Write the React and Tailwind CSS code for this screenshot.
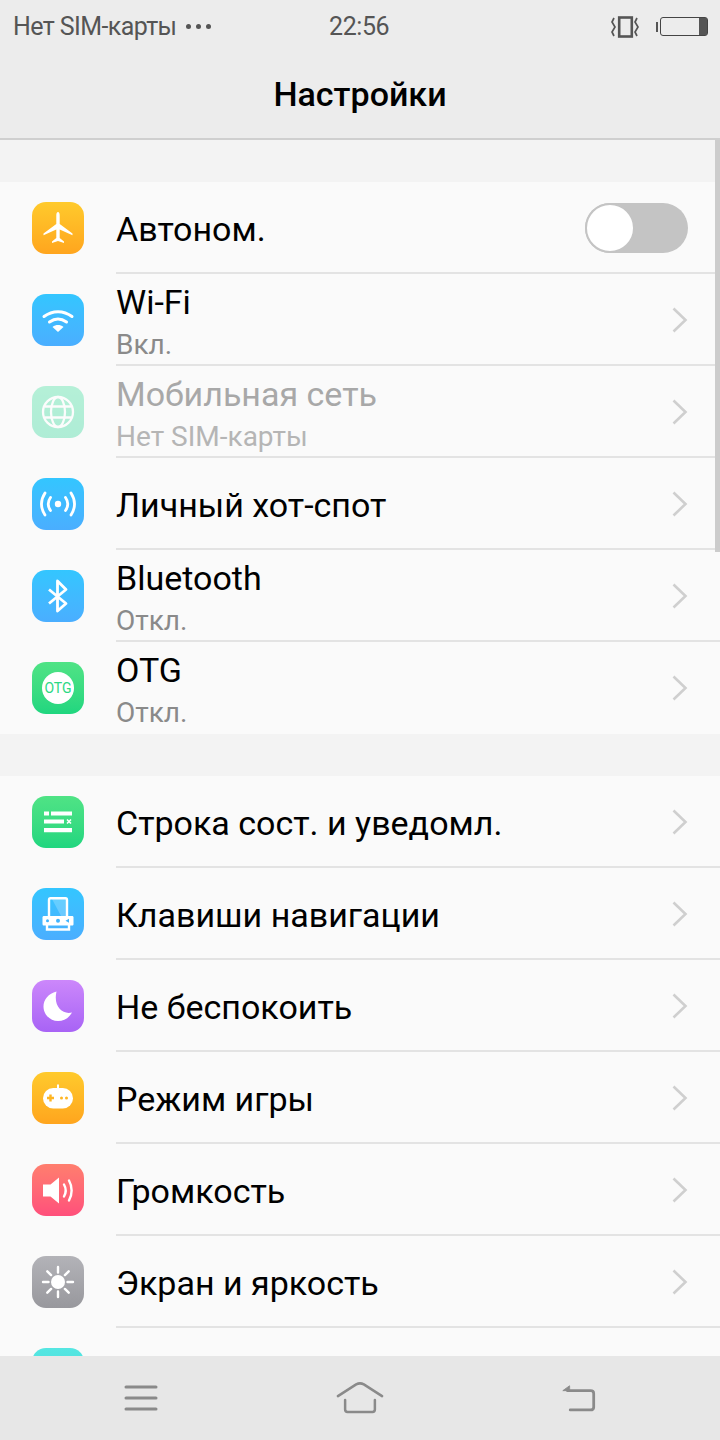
import React from 'react';

const Chevron = () => (
  <svg width="18" height="28" viewBox="0 0 18 28" fill="none" className="shrink-0 -mr-[1px]">
    <path d="M2.500 2.500 14.500 14 2.500 25.500" stroke="#cfcfcf" strokeWidth="2.600" />
  </svg>
);

const Icon = ({ gradient, dim, children }) => (
  <div className={`w-[52px] h-[52px] shrink-0 rounded-[14px] flex items-center justify-center bg-gradient-to-b ${gradient} ${dim ? 'opacity-40' : ''}`}>
    <svg width="52" height="52" viewBox="0 0 52 52" fill="none">{children}</svg>
  </div>
);

const blue = 'from-[#33c6ff] to-[#4aaeff]';
const green = 'from-[#4fe385] to-[#1fd67f]';
const orange = 'from-[#ffca2c] to-[#ffa51e]';

const PlaneIcon = () => (
  <Icon gradient={orange}>
    <path d="M26 10c1.100 0 1.700 1.500 1.700 3.500V22l12.800 9.400v1.800L27.700 27.500V36l4.300 3.500V41L26 39l-6 2v-1.500l4.300-3.500v-8.500L11.500 33.200v-1.800L24.300 22v-8.500c0-2 .6-3.500 1.700-3.500z" fill="#fff" />
  </Icon>
);
const WifiIcon = () => (
  <Icon gradient={blue}>
    <path d="M12 22.500c8.500-6.500 19.500-6.500 28 0" stroke="#fff" strokeWidth="3" strokeLinecap="round" />
    <path d="M17.500 28c5.500-4 11.500-4 17 0" stroke="#fff" strokeWidth="3" strokeLinecap="round" />
    <path d="M20.500 33c3.500-2.600 7.500-2.600 11 0L26 38z" fill="#fff" />
  </Icon>
);
const GlobeIcon = () => (
  <Icon gradient="from-[#4fe3a5] to-[#3fd9a0]" dim>
    <g stroke="#fff" strokeWidth="2.300">
      <circle cx="26" cy="26" r="15" />
      <ellipse cx="26" cy="26" rx="7" ry="15" />
      <path d="M13 20.500h26M13 31.500h26" />
    </g>
  </Icon>
);
const HotspotIcon = () => (
  <Icon gradient={blue}>
    <circle cx="26" cy="26" r="3.200" fill="#fff" />
    <g stroke="#fff" strokeWidth="2.800" strokeLinecap="round">
      <path d="M18.500 19.500c-2.800 4-2.800 9 0 13M33.500 19.500c2.800 4 2.800 9 0 13" />
      <path d="M13 15c-4.500 7-4.500 15 0 22M39 15c4.500 7 4.500 15 0 22" />
    </g>
  </Icon>
);
const BluetoothIcon = () => (
  <Icon gradient={blue}>
    <path d="M17 19.500 34 33.500 25.500 41V11L34 19.500 17 33.500" stroke="#fff" strokeWidth="2.800" strokeLinejoin="round" />
  </Icon>
);
const OtgIcon = () => (
  <Icon gradient={green}>
    <circle cx="26" cy="26" r="16" fill="#fff" />
    <text x="26" y="31" textAnchor="middle" fontSize="14" fill="#2cd884" fontFamily="Roboto, sans-serif">OTG</text>
  </Icon>
);
const StatusIcon = () => (
  <Icon gradient={green}>
    <path d="M12 15.500h5v4h-5zM19 15.500h21v4H19zM12 23.500h20v4H12zM12 32h28v4.200H12z" fill="#fff" />
    <path d="M35 23.500l4 4M39 23.500l-4 4" stroke="#fff" strokeWidth="1.600" />
  </Icon>
);
const NavKeysIcon = () => (
  <Icon gradient={blue}>
    <path d="M20 11h14.500v17H29z" fill="#fff" fillOpacity=".22" />
    <path d="M17 28V12c0-1 .6-1.800 1.500-1.800h15c.9 0 1.500.8 1.500 1.800v16" stroke="#fff" strokeWidth="2.400" />
    <path d="M10.500 29.500c0-1 .5-1.500 1.500-1.500h28c1 0 1.500.5 1.500 1.500v6.500c0 1-.5 1.500-1.500 1.500H12c-1 0-1.500-.5-1.500-1.500z" fill="#fff" />
    <path d="M15 37v4.500h22V37" stroke="#fff" strokeWidth="2.400" />
    <circle cx="15.500" cy="32.700" r="1.500" fill="#3fb4ff" />
    <circle cx="26" cy="32.700" r="2" fill="#3fb4ff" />
    <path d="M33.500 32.700l3.500-2v4z" fill="#3fb4ff" />
  </Icon>
);
const MoonIcon = () => (
  <Icon gradient="from-[#cc87fb] to-[#a863f5]">
    <path d="M24.500 11.500C16.500 13.500 11.500 19.500 11.500 26.500c0 8.500 7 14.500 14.500 14.500 6 0 11-3 14-8.500-9.500 2.500-19-6-15.500-21z" fill="#fff" />
  </Icon>
);
const GameIcon = () => (
  <Icon gradient={orange}>
    <path d="M25 12.500h2V17h-2z" fill="#fff" />
    <rect x="11" y="16" width="30" height="20.500" rx="10.200" fill="#fff" />
    <path d="M15 26h7M18.500 22.500v7" stroke="#ffb521" strokeWidth="2.400" />
    <circle cx="29.500" cy="26" r="1.500" fill="#ffb521" />
    <circle cx="34.500" cy="26" r="1.500" fill="#ffb521" />
  </Icon>
);
const VolumeIcon = () => (
  <Icon gradient="from-[#ff7e6e] to-[#ff4f7b]">
    <path d="M11 20.500h7.500L27 13.500v26l-8.500-7H11z" fill="#fff" />
    <path d="M32 20.500c2 3.500 2 8.500 0 12M37 16.500c3.500 6 3.500 14 0 20" stroke="#fff" strokeWidth="2.400" strokeLinecap="round" />
  </Icon>
);
const BrightnessIcon = () => (
  <Icon gradient="from-[#b3b3b8] to-[#98989d]">
    <circle cx="26" cy="26" r="7" fill="#fff" />
    <path d="M26 11v5.500M26 35.500V41M11 26h5.500M35.500 26H41M15.300 15.300l3.800 3.800M32.900 32.900l3.800 3.800M15.300 36.700l3.800-3.800M32.900 19.100l3.800-3.800" stroke="#fff" strokeWidth="2.400" strokeLinecap="round" />
  </Icon>
);

const Row = ({ icon, title, sub, dim, last, toggle }) => (
  <div className="h-[92px] pl-[32px] flex items-center gap-[32px]">
    {icon}
    <div className={`flex-1 h-full flex items-center pt-[2px] pr-[32px] border-b-2 ${last ? 'border-transparent' : 'border-[#e3e3e3]'}`}>
      <div className="flex-1 min-w-0 pt-[2px]">
        <div className={`text-[34px] leading-[40px] ${dim ? 'text-[#a8a8a8]' : 'text-black'}`}>{title}</div>
        {sub && <div className={`text-[28px] leading-[32px] mt-[7px] ${dim ? 'text-[#b5b5b5]' : 'text-[#8a8a8a]'}`}>{sub}</div>}
      </div>
      {toggle ? (
        <div className="w-[103px] h-[50px] rounded-full bg-[#c4c4c4]">
          <div className="w-[50px] h-[50px] rounded-full bg-white border-2 border-[#c4c4c4]" />
        </div>
      ) : <Chevron />}
    </div>
  </div>
);

export default function App() {
  return (
    <div className="relative w-[720px] h-[1440px] overflow-hidden flex flex-col bg-[#f3f3f3] font-['Roboto',sans-serif]">
      {/* Status bar */}
      <div className="h-[50px] shrink-0 bg-[#ececec] flex items-center pt-[3px] pl-[13px] pr-[12px] text-[#555] text-[25px] relative">
        <span className="tracking-[-0.6px]">Нет SIM-карты</span>
        <span className="ml-[10px] flex gap-[5px]">
          <i className="w-[5px] h-[5px] rounded-full bg-[#555]" />
          <i className="w-[5px] h-[5px] rounded-full bg-[#555]" />
          <i className="w-[5px] h-[5px] rounded-full bg-[#555]" />
        </span>
        <span className="absolute left-[329px] tracking-[-0.4px]">22:56</span>
        <div className="ml-auto flex items-center gap-[16px]">
          <svg width="30" height="24" viewBox="0 0 30 24" fill="none" stroke="#555">
            <rect x="9.200" y="2.500" width="12.600" height="19" strokeWidth="2.600" />
            <path d="M4 3 2 7l3 5-3 5 2 4M27 3l-2 4 3 5-3 5 2 4" strokeWidth="1.700" />
          </svg>
          <div className="flex items-center">
            <i className="w-[2px] h-[10px] border-l-2 border-[#555] mr-[2px]" />
            <div className="w-[48px] h-[19px] rounded-[3px] border border-[#444] flex justify-end">
              <i className="w-[8px] h-full bg-[#555]" />
            </div>
          </div>
        </div>
      </div>

      {/* Title bar */}
      <div className="h-[90px] shrink-0 bg-[#ececec] border-b-2 border-[#cfcfcf] flex items-center justify-center">
        <h1 className="text-[34px] font-medium text-black leading-none">Настройки</h1>
      </div>

      {/* List */}
      <div className="flex-1 min-h-0 overflow-hidden pt-[42px]">
        <div className="bg-[#fafafa]">
          <Row icon={<PlaneIcon />} title="Автоном." toggle />
          <Row icon={<WifiIcon />} title="Wi-Fi" sub="Вкл." />
          <Row icon={<GlobeIcon />} title="Мобильная сеть" sub="Нет SIM-карты" dim />
          <Row icon={<HotspotIcon />} title="Личный хот-спот" />
          <Row icon={<BluetoothIcon />} title="Bluetooth" sub="Откл." />
          <Row icon={<OtgIcon />} title="OTG" sub="Откл." last />
        </div>
        <div className="bg-[#fafafa] mt-[42px]">
          <Row icon={<StatusIcon />} title="Строка сост. и уведомл." />
          <Row icon={<NavKeysIcon />} title="Клавиши навигации" />
          <Row icon={<MoonIcon />} title="Не беспокоить" />
          <Row icon={<GameIcon />} title="Режим игры" />
          <Row icon={<VolumeIcon />} title="Громкость" />
          <Row icon={<BrightnessIcon />} title="Экран и яркость" />
          <Row icon={<Icon gradient="from-[#55e6e2] to-[#45dcd8]" />} title="" last />
        </div>
      </div>

      {/* Scrollbar */}
      <div className="absolute right-0 top-[140px] w-[5px] h-[412px] bg-[#cccccc]" />

      {/* Navigation bar */}
      <div className="h-[84px] shrink-0 bg-[#e7e7e7] flex items-center justify-between px-[124px]">
        <svg width="34" height="28" viewBox="0 0 34 28" stroke="#8a8a8a" strokeWidth="3" strokeLinecap="round">
          <path d="M2 3h30M2 14h30M2 25h30" />
        </svg>
        <svg width="48" height="32" viewBox="0 0 50 32" fill="none" stroke="#8a8a8a" strokeWidth="2.600" strokeLinecap="round" strokeLinejoin="round">
          <path d="M2 14 21 1.800c2.500-1.300 5.500-1.300 8 0L48 14" />
          <path d="M9.500 18v10c0 1.500 1 2.500 2.500 2.500h26c1.500 0 2.500-1 2.500-2.500V18" />
        </svg>
        <svg width="35" height="30" viewBox="0 0 38 30" fill="none" stroke="#8a8a8a" strokeWidth="3" strokeLinecap="round" strokeLinejoin="round">
          <path d="M7 7h25c2 0 3.500 1 3.500 3v15c0 2-1.500 3-3.500 3H10" />
          <path d="M9 2 2 7h7z" fill="#8a8a8a" strokeWidth="1" />
        </svg>
      </div>
    </div>
  );
}
